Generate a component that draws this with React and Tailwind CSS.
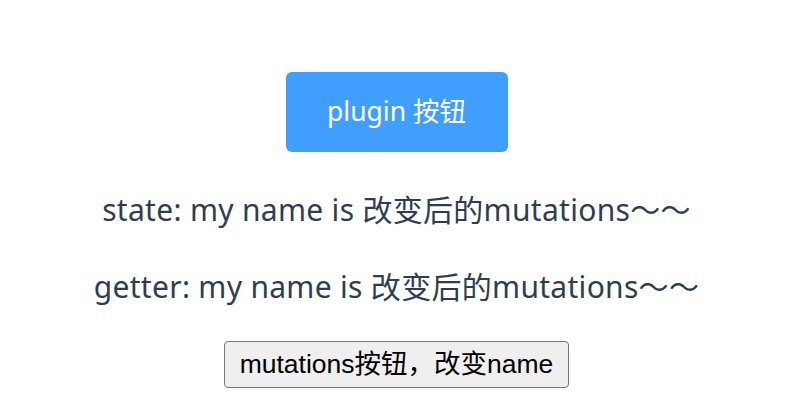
export default function App() {
  return (
    <div className="flex flex-col items-center pt-[72px] pr-[7px] w-[800px] h-[420px] bg-white text-[#2c3e50] [font-family:'Noto_Sans','Noto_Sans_CJK_SC',sans-serif]">
      <button className="w-[222px] h-[80px] rounded-[6px] bg-[#409eff] text-white text-[26.5px] [font-family:'Noto_Sans','Noto_Sans_CJK_SC',sans-serif]">
        plugin 按钮
      </button>
      <div className="mt-[42px] leading-[32px] text-[30px] tracking-[0.3px]">state: my name is 改变后的mutations～～</div>
      <div className="mt-[45px] leading-[32px] text-[30px] tracking-[0.3px]">getter: my name is 改变后的mutations～～</div>
      <button className="mt-[38px] w-[345px] h-[47px] rounded-[4px] border border-[#767676] bg-[#efefef] text-black text-[26.5px] [font-family:'Liberation_Sans','Noto_Sans_CJK_SC',sans-serif]">
        mutations按钮，改变name
      </button>
    </div>
  );
}
